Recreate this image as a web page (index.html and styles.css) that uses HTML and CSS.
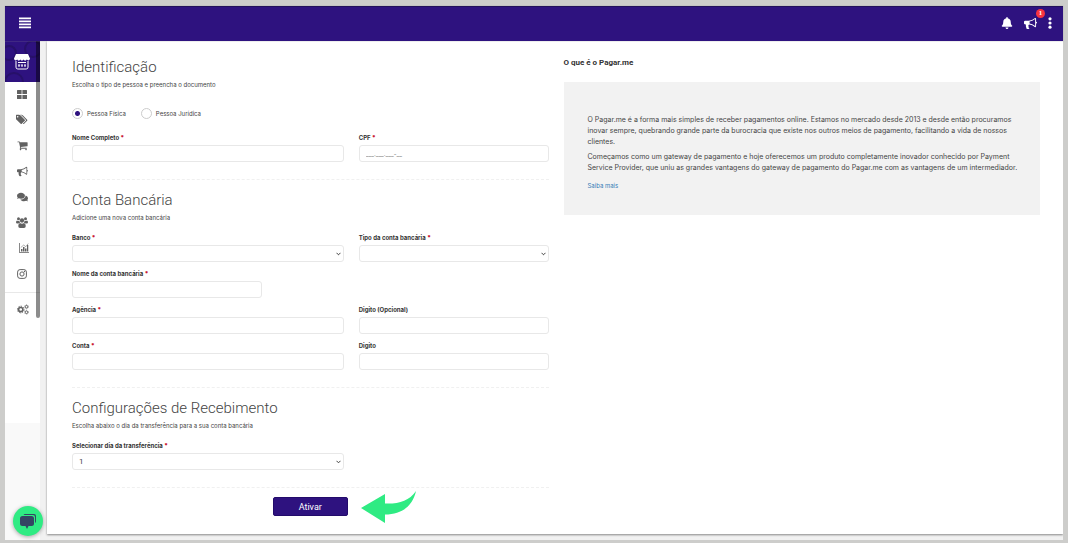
FILE: index.html
```html
<!DOCTYPE html>
<html lang="pt-BR">
<head>
<meta charset="utf-8">
<meta name="viewport" content="width=device-width, initial-scale=1">
<title>Pagar.me</title>
<link rel="stylesheet" href="styles.css">
</head>
<body>
<div class="app">
  <header class="topbar">
    <button class="icon-button" type="button" aria-label="Menu">
      <svg width="12" height="12" viewBox="0 0 12 12"><path d="M0 .6h12v1.700H0zM0 3.600h12v1.700H0zM0 6.600h12v1.700H0zM0 9.600h12v1.700H0z"/></svg>
    </button>
    <div class="topbar-actions">
      <button class="icon-button" type="button" aria-label="Notificações">
        <svg width="12" height="12" viewBox="0 0 448 512"><path d="M224 512c35.32 0 63.97-28.65 63.97-64H160.03c0 35.35 28.65 64 63.97 64zm215.39-149.71c-19.32-20.76-55.47-51.99-55.47-154.29 0-77.7-54.48-139.9-127.94-155.16V32c0-17.67-14.32-32-31.98-32s-31.98 14.33-31.98 32v20.84C118.56 68.1 64.08 130.3 64.08 208c0 102.3-36.15 133.53-55.47 154.29-6 6.45-8.66 14.16-8.61 21.71.11 16.4 12.98 32 32.1 32h383.8c19.12 0 32-15.6 32.1-32 .05-7.55-2.61-15.27-8.61-21.71z"/></svg>
      </button>
      <button class="icon-button news" type="button" aria-label="Novidades">
        <svg width="13" height="13" viewBox="0 0 1792 1792"><path d="M1664 640q53 0 90.5 37.5t37.5 90.5-37.5 90.5-90.5 37.5v384q0 52-38 90t-90 38q-417-347-812-380-58 19-91 66t-31 100.5 40 92.5q-20 33-23 65.5t6 58 33.5 55 48 50 61.5 50.5q-29 58-111.5 83t-168.5 11.5-132-55.5q-7-23-29.5-87.5t-32-94.5-23-89-15-101 3.5-98.5 22-110.5h-122q-66 0-113-47t-47-113v-192q0-66 47-113t113-47h480q435 0 896-384 52 0 90 38t38 90v384zm-128 604v-954q-394 302-768 343v270q377 42 768 341z"/></svg>
        <span class="badge">1</span>
      </button>
      <button class="icon-button" type="button" aria-label="Mais opções">
        <svg width="4" height="12" viewBox="0 0 4 12"><circle cx="2" cy="1.8" r="1.6"/><circle cx="2" cy="6" r="1.6"/><circle cx="2" cy="10.2" r="1.6"/></svg>
      </button>
    </div>
  </header>

  <div class="shell">
    <aside class="sidebar">
      <div class="sidebar-body">
        <a class="store" href="#" aria-label="Loja">
          <svg class="store-pattern" viewBox="0 0 35 41" preserveAspectRatio="none"><circle cx="9" cy="41" r="9"/><circle cx="28" cy="8" r="8"/><circle cx="4" cy="12" r="7"/></svg>
          <svg class="store-icon" width="16" height="17" viewBox="0 0 16 17"><path d="M2 1h12l2 4.6c0 2-2.3 2.4-3.2 1-.8 1.5-2.6 1.5-3.2 0-.8 1.5-2.6 1.5-3.2 0-.8 1.5-2.6 1.5-3.2 0C2.400 8 0 7.600 0 5.600z"/><path class="line" d="M2 8v6.200q0 1.800 1.800 1.800h8.400q1.800 0 1.800-1.800V8"/><path d="M4 9h8v1H4zM4 11.500h2.200v1H4zM7 11.500h2v1H7zM10 11.500h2v1h-2zM4.500 12.500h1v1.500h-1zM7.500 12.500h1v1.500h-1zM10.500 12.500h1v1.500h-1z"/></svg>
        </a>
        <nav class="nav" aria-label="Principal">
          <a href="#" aria-label="Painel"><svg width="10" height="9" viewBox="0 0 10 9"><path d="M.6 0h4v4H.6Q0 4 0 3.400V.6Q0 0 .6 0zM5.400 0h4q.6 0 .6.6v2.800q0 .6-.6.6h-4zM0 5h4.600v4h-4Q0 9 0 8.400zM5.400 5H10v3.400q0 .6-.6.6h-4z"/></svg></a>
          <a href="#" aria-label="Produtos"><svg width="12" height="11" viewBox="0 0 1920 1792"><path d="M384 448q0-53-37.500-90.500t-90.500-37.500-90.500 37.500-37.500 90.500 37.500 90.500 90.500 37.500 90.500-37.500 37.500-90.500zm1067 576q0 53-37 90l-491 492q-39 37-91 37-53 0-90-37l-715-716q-38-37-64.500-101t-26.500-117v-416q0-52 38-90t90-38h416q53 0 117 26.500t102 64.500l715 714q37 39 37 91zm384 0q0 53-37 90l-491 492q-39 37-91 37-36 0-59-14t-53-45l470-470q37-37 37-90 0-52-37-91l-715-714q-38-38-102-64.500t-117-26.500h224q53 0 117 26.500t102 64.500l715 714q37 39 37 91z"/></svg></a>
          <a href="#" aria-label="Pedidos"><svg width="11" height="11" viewBox="0 0 1792 1792"><path d="M704 1536q0 52-38 90t-90 38-90-38-38-90 38-90 90-38 90 38 38 90zm896 0q0 52-38 90t-90 38-90-38-38-90 38-90 90-38 90 38 38 90zm128-1088v512q0 24-16.500 42.500t-40.500 21.500l-1044 122q13 60 13 70 0 16-24 64h920q26 0 45 19t19 45-19 45-45 19h-1024q-26 0-45-19t-19-45q0-11 8-31.500t16-36 21.500-40 15.500-29.500l-177-823h-204q-26 0-45-19t-19-45 19-45 45-19h256q16 0 28.500 6.500t19.500 15.500 13 24.500 8 26 5.500 29.500 4.500 26h1201q26 0 45 19t19 45z"/></svg></a>
          <a href="#" aria-label="Marketing"><svg width="11" height="11" viewBox="0 0 1792 1792"><path d="M1664 640q53 0 90.5 37.5t37.5 90.5-37.5 90.5-90.5 37.5v384q0 52-38 90t-90 38q-417-347-812-380-58 19-91 66t-31 100.5 40 92.5q-20 33-23 65.5t6 58 33.5 55 48 50 61.5 50.5q-29 58-111.5 83t-168.5 11.5-132-55.5q-7-23-29.5-87.5t-32-94.5-23-89-15-101 3.5-98.5 22-110.5h-122q-66 0-113-47t-47-113v-192q0-66 47-113t113-47h480q435 0 896-384 52 0 90 38t38 90v384zm-128 604v-954q-394 302-768 343v270q377 42 768 341z"/></svg></a>
          <a href="#" aria-label="Mensagens"><svg width="11" height="10" viewBox="0 0 576 512"><path d="M416 192c0-88.400-93.100-160-208-160S0 103.600 0 192c0 34.300 14.100 65.900 38 92-13.400 30.200-35.500 54.200-35.800 54.500-2.200 2.300-2.800 5.700-1.500 8.700S4.800 352 8 352c36.600 0 66.900-12.300 88.700-25 32.200 15.700 70.300 25 111.300 25 114.900 0 208-71.600 208-160zm122 220c23.900-26 38-57.700 38-92 0-66.900-53.500-124.200-129.300-148.100.9 6.600 1.300 13.300 1.300 20.100 0 105.900-107.700 192-240 192-10.800 0-21.300-.8-31.700-1.900C207.800 439.600 281.800 480 368 480c41 0 79.100-9.200 111.300-25 21.800 12.700 52.100 25 88.700 25 3.200 0 6.100-1.900 7.300-4.800 1.300-2.900.7-6.300-1.500-8.700-.3-.3-22.400-24.200-35.800-54.500z"/></svg></a>
          <a href="#" aria-label="Clientes"><svg width="12" height="11" viewBox="0 0 24 22"><circle cx="5" cy="3.500" r="3"/><circle cx="19" cy="3.500" r="3"/><circle cx="12" cy="7" r="4.300"/><path d="M2 7q3 2 5 .5Q7 10 8.500 11.500 6 12 5 13H2.500Q0 13 0 10.500T2 7zM22 7q-3 2-5 .5 0 2.500-1.500 4 2.500.5 3.500 1.500h2.500q2.500 0 2.500-2.500T22 7zM8 12q4 2.500 8 0 3.500.5 3.500 6 0 4-3.500 4H8q-3.500 0-3.500-4 0-5.500 3.500-6z"/></svg></a>
          <a class="shifted" href="#" aria-label="Relatórios"><svg width="10" height="10" viewBox="0 0 20 20"><path d="M0 0h1.500v18H20v1.500H0zM4 12h3v5H4zM8 8h3v9H8zM12 11h3v6h-3zM16 4h2.500v13H16z"/><path class="line" d="M3.500 9l6-5 4 3.500 5-6.500"/></svg></a>
          <a href="#" aria-label="Instagram"><svg width="10" height="10" viewBox="0 0 20 20"><rect class="line thick" x="1.200" y="1.200" width="17.600" height="17.600" rx="5"/><circle class="line thick" cx="10" cy="10" r="4.200"/><circle cx="15" cy="5" r="1.300"/></svg></a>
        </nav>
        <a class="settings" href="#" aria-label="Configurações"><svg width="12" height="11" viewBox="0 0 24 22"><circle class="line gear" cx="7.500" cy="11" r="4.200"/><circle class="line teeth" cx="7.500" cy="11" r="6.600"/><circle class="line small-gear" cx="19" cy="5.500" r="2.600"/><circle class="line small-teeth" cx="19" cy="5.500" r="4"/><circle class="line small-gear" cx="19" cy="16.500" r="2.600"/><circle class="line small-teeth" cx="19" cy="16.500" r="4"/></svg></a>
        <span class="scroll-thumb"></span>
      </div>
      <button class="chat" type="button" aria-label="Abrir chat">
        <svg width="16" height="15" viewBox="0 0 16 15"><path d="M5 0h9q2 0 2 2v5q0 1.500-1 2V3q0-2-2-2H3.500Q4 0 5 0z"/><path d="M2.500 2h9q2.500 0 2.500 2.500v5Q14 12 11.500 12H8.500L7 15l-1.500-3h-3Q0 12 0 9.500v-5Q0 2 2.500 2z"/></svg>
      </button>
    </aside>

    <main class="card">
      <form class="form">
        <h1>Identificação</h1>
        <p class="lead">Escolha o tipo de pessoa e preencha o documento</p>
        <div class="radios">
          <label><input type="radio" name="pessoa" checked>Pessoa Física</label>
          <label><input type="radio" name="pessoa">Pessoa Jurídica</label>
        </div>
        <div class="fields">
          <div class="field"><label for="nome">Nome Completo <b>*</b></label><input id="nome" type="text"></div>
          <div class="field"><label for="cpf">CPF <b>*</b></label><input id="cpf" type="text" placeholder="___.___.___-__"></div>
        </div>
        <hr>
        <h2>Conta Bancária</h2>
        <p class="lead">Adicione uma nova conta bancária</p>
        <div class="fields">
          <div class="field"><label for="banco">Banco <b>*</b></label>
            <div class="select"><select id="banco"><option></option></select><svg width="5" height="4" viewBox="0 0 5 4"><path class="line" d="M.5.8l2 2 2-2"/></svg></div></div>
          <div class="field"><label for="tipo">Tipo da conta bancária <b>*</b></label>
            <div class="select"><select id="tipo"><option></option></select><svg width="5" height="4" viewBox="0 0 5 4"><path class="line" d="M.5.8l2 2 2-2"/></svg></div></div>
        </div>
        <div class="fields reversed">
          <div class="field"><label for="nome-conta">Nome da conta bancária <b>*</b></label><input id="nome-conta" type="text"></div>
        </div>
        <div class="fields">
          <div class="field"><label for="agencia">Agência <b>*</b></label><input id="agencia" type="text"></div>
          <div class="field"><label for="digito-agencia">Digito (Opcional)</label><input id="digito-agencia" type="text"></div>
          <div class="field"><label for="conta">Conta <b>*</b></label><input id="conta" type="text"></div>
          <div class="field"><label for="digito-conta">Digito</label><input id="digito-conta" type="text"></div>
        </div>
        <hr>
        <h2>Configurações de Recebimento</h2>
        <p class="lead">Escolha abaixo o dia da transferência para a sua conta bancária</p>
        <div class="fields">
          <div class="field"><label for="dia">Selecionar dia da transferência <b>*</b></label>
            <div class="select"><select id="dia"><option>1</option></select><svg width="5" height="4" viewBox="0 0 5 4"><path class="line" d="M.5.8l2 2 2-2"/></svg></div></div>
        </div>
        <hr>
        <div class="submit">
          <button class="primary" type="button">Ativar</button>
          <svg class="arrow" width="55" height="33" viewBox="0 0 55 33"><path d="M0 17L24 3v9.500C38 13 48 10 55 0c-3 14-13 23.500-31 23.500V32z"/></svg>
        </div>
      </form>

      <section class="about">
        <h3>O que é o Pagar.me</h3>
        <div class="panel">
          <p>O Pagar.me é a forma mais simples de receber pagamentos online. Estamos no mercado desde 2013 e desde então procuramos inovar sempre, quebrando grande parte da burocracia que existe nos outros meios de pagamento, facilitando a vida de nossos clientes.</p>
          <p>Começamos como um gateway de pagamento e hoje oferecemos um produto completamente inovador conhecido por Payment Service Provider, que uniu as grandes vantagens do gateway de pagamento do Pagar.me com as vantagens de um intermediador.</p>
          <a href="#">Saiba mais</a>
        </div>
      </section>
    </main>
  </div>
</div>
</body>
</html>
```
FILE: styles.css
```css
* {
  box-sizing: border-box;
}

body {
  margin: 0;
  min-height: 100vh;
  padding: 6px 5px 3px;
  display: flex;
  background: #cdcdcb;
  color: #444;
  font-family: Inter, Roboto, sans-serif;
  font-size: 6px;
  line-height: 10px;
}

button, input, select {
  font: inherit;
  color: inherit;
}

h1, h2, h3, p {
  margin: 0;
}

h1, h2, h3 {
  font-family: Roboto, sans-serif;
}

svg {
  display: block;
  fill: currentColor;
}

svg .line {
  fill: none;
  stroke: currentColor;
}

svg .thick {
  stroke-width: 2;
}

.app {
  flex: 1;
  display: flex;
  flex-direction: column;
  background: #f1f1f1;
}

.topbar {
  display: flex;
  align-items: center;
  justify-content: space-between;
  height: 35px;
  padding: 0 11px 2px 14px;
  background: #2e127f;
  border-top: 1px solid #22105c;
  box-shadow: 0 0 1px #999;
  color: #fff;
  position: relative;
  z-index: 1;
}

.topbar-actions {
  display: flex;
  align-items: center;
  gap: 11px;
}

.icon-button {
  padding: 0;
  border: 0;
  background: none;
}

.news {
  position: relative;
}

.badge {
  position: absolute;
  top: -8px;
  right: -8px;
  width: 9px;
  height: 9px;
  border-radius: 50%;
  background: #f8343f;
  font: bold 7px/9px "Liberation Serif", serif;
}

.shell {
  flex: 1;
  display: grid;
  grid-template-columns: 35px minmax(0, 1fr);
  column-gap: 7px;
}

.sidebar {
  display: flex;
  flex-direction: column;
  justify-content: space-between;
  background: #f9f9f9;
}

.sidebar-body {
  position: relative;
  height: 382px;
  background: #fff;
  color: #616161;
}

.sidebar a {
  display: grid;
  place-items: center;
  color: inherit;
}

.sidebar .store {
  position: relative;
  height: 41px;
  background: #2e127f;
  color: #fff;
}

.store-pattern {
  position: absolute;
  inset: 0;
  width: 100%;
  height: 100%;
  fill: none;
  stroke: #271069;
  stroke-width: 2;
}

.store-icon {
  position: relative;
}

.sidebar .store, .nav a {
  padding: 0 1px 1px 0;
}

.nav {
  display: grid;
  grid-template-rows: repeat(8, 1fr);
  height: 205px;
}

.nav .shifted {
  padding-left: 3px;
}

.sidebar .settings {
  height: 36px;
  border-top: 1px solid #e8e8e8;
  margin-top: 5px;
  padding-bottom: 2px;
}

.gear {
  stroke-width: 3;
}

.teeth {
  stroke-width: 2;
  stroke-dasharray: 3 2;
}

.small-gear {
  stroke-width: 2;
}

.small-teeth {
  stroke-width: 1;
  stroke-dasharray: 2 2;
}

.scroll-thumb {
  position: absolute;
  top: 0;
  right: 0;
  width: 4px;
  height: 277px;
  border-radius: 0 0 2px 2px;
  background: rgba(0, 0, 0, 0.45);
}

.chat {
  display: grid;
  place-items: center;
  width: 30px;
  height: 30px;
  margin: 0 0 4px 8px;
  padding: 0;
  border: 0;
  border-radius: 50%;
  background: #2feb83;
  box-shadow: 0 1px 4px rgba(0, 0, 0, 0.35);
  color: #344563;
  z-index: 1;
}

.card {
  display: grid;
  grid-template-columns: minmax(0, 1fr) minmax(0, 1fr);
  column-gap: 15px;
  margin-bottom: 6px;
  padding: 14px 23px 15px 25px;
  background: #fff;
  box-shadow: 0 1px 2px #888;
  clip-path: inset(0 0 -3px -3px);
}

h1, h2 {
  margin-bottom: 1px;
  font-size: 15px;
  font-weight: 300;
  line-height: 24px;
}

.lead {
  margin-bottom: 10px;
}

.radios {
  display: flex;
  gap: 15px;
  margin: 16px 0 12px;
}

.radios label {
  display: flex;
  align-items: center;
  gap: 4px;
}

.radios input {
  appearance: none;
  width: 11px;
  height: 11px;
  margin: 2px 0;
  border: 1px solid #ccc;
  border-radius: 50%;
}

.radios input:checked {
  background: radial-gradient(circle, #2e127f 2px, #fff 3px);
}

.fields {
  display: grid;
  grid-template-columns: 272fr 190fr;
  column-gap: 15px;
}

.reversed {
  grid-template-columns: 190fr 272fr;
}

.field {
  display: flex;
  flex-direction: column;
  gap: 2px;
  margin-bottom: 7px;
}

.field label {
  color: #333;
  font-weight: 700;
}

.field b {
  color: #c8102e;
}

.field input, .field select {
  appearance: none;
  display: block;
  width: 100%;
  height: 17px;
  margin: 0;
  padding: 0 6px;
  border: 1px solid #e8e8e8;
  border-radius: 3px;
  background: #fff;
}

.field select {
  font-family: Roboto, sans-serif;
  font-size: 8px;
}

.select {
  position: relative;
}

.select svg {
  position: absolute;
  right: 3px;
  top: 7px;
}

hr {
  margin: 10px 0 8px;
  border: 0;
  border-top: 1px dashed #f0f0f0;
}

.submit {
  display: flex;
  justify-content: center;
  position: relative;
  padding-top: 1px;
}

.primary {
  width: 75px;
  height: 19px;
  padding: 0;
  border: 1px solid #230b6b;
  border-radius: 2px;
  background: #2e127f;
  color: #fff;
  font-family: Roboto, sans-serif;
  font-size: 9px;
}

.arrow {
  position: absolute;
  left: calc(50% + 51px);
  top: -5px;
  color: #2feb83;
}

.about h3 {
  margin: 3px 0 14px;
  color: #333;
  font-size: 8px;
  line-height: 10px;
}

.panel {
  padding: 32px 18px 24px 24px;
  background: #f2f2f2;
  font-size: 7px;
  line-height: 11px;
}

.panel p {
  margin-bottom: 4px;
}

.panel a {
  display: inline-block;
  margin-top: 3px;
  color: #337ab7;
  font-size: 6px;
  text-decoration: none;
}
```
